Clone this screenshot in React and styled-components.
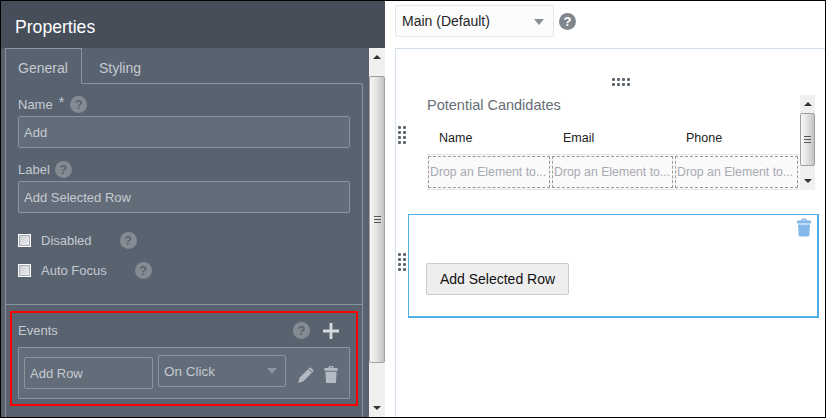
import React from 'react';
import styled, { createGlobalStyle } from 'styled-components';

const GlobalStyle = createGlobalStyle`
  html, body {
    margin: 0;
    padding: 0;
    background: #fff;
  }
  * {
    box-sizing: border-box;
  }
`;

const Page = styled.div`
  display: flex;
  width: 826px;
  height: 418px;
  border: 1px solid #000;
  overflow: hidden;
  font-family: 'Liberation Sans', Arial, sans-serif;
`;

const Properties = styled.aside`
  display: flex;
  flex-direction: column;
  width: 384px;
  flex: none;
  background: #596370;
`;

const PanelHeader = styled.header`
  height: 47px;
  flex: none;
  padding: 15px 0 0 14px;
  background: #454e59;
  color: #fff;
  font-size: 17.6px;
  line-height: 22px;
`;

const PanelBody = styled.div`
  display: flex;
  flex: 1;
  min-height: 0;
`;

const PanelContent = styled.div`
  display: flex;
  flex-direction: column;
  width: 368px;
  padding-left: 4px;
`;

const Tabs = styled.div`
  display: flex;
  height: 36px;
  flex: none;
  margin-bottom: -1px;
`;

const Tab = styled.div`
  width: ${props => props.$width}px;
  padding: 10px 0 0 ${props => props.$pad}px;
  font-size: 14px;
  line-height: 18px;
  color: #c5cad0;
  position: relative;
  z-index: 1;
  border: 1px solid ${props => (props.$active ? '#8b949e' : 'transparent')};
  border-bottom: 1px solid ${props => (props.$active ? '#596370' : 'transparent')};
`;

const TabPane = styled.div`
  display: flex;
  flex-direction: column;
  flex: 1;
  width: 358px;
  border: 1px solid #8b949e;
  border-bottom: none;
  border-top-right-radius: 3px;
`;

const GeneralForm = styled.div`
  display: flex;
  flex-direction: column;
  height: 221px;
  flex: none;
  padding: 10px 12px 0;
  border-bottom: 1px solid #8b949e;
`;

const FieldLabel = styled.div`
  display: flex;
  align-items: center;
  height: 20px;
  margin-top: ${props => props.$top || 0}px;
  margin-bottom: 2px;
  font-size: 13px;
  color: #c5cad0;
  gap: 5px;
`;

const Required = styled.span`
  font-size: 14px;
  margin: -4px 1px 0 1px;
`;

const TextBox = styled.div`
  display: flex;
  align-items: center;
  height: 32px;
  width: ${props => props.$width || 332}px;
  padding-left: 5px;
  background: #636d7a;
  border: 1px solid #8b949e;
  border-radius: 2px;
  font-size: 13px;
  color: #c5cad0;
`;

const CheckRow = styled.label`
  display: flex;
  align-items: center;
  height: 20px;
  margin-top: ${props => props.$top}px;
  font-size: 13px;
  color: #c5cad0;
`;

const CheckBox = styled.span`
  width: 13px;
  height: 13px;
  margin-right: 10px;
  flex: none;
  background: linear-gradient(135deg, #c9cdd2, #f0f1f3);
  border: 1px solid #fff;
  box-shadow: inset 0 0 0 1px #a9aeb4;
`;

const HelpIcon = styled.span`
  display: inline-flex;
  align-items: center;
  justify-content: center;
  width: 17px;
  height: 17px;
  flex: none;
  margin-left: ${props => props.$left || 0}px;
  border-radius: 50%;
  background: ${props => props.$color || '#858b93'};
  color: ${props => props.$ink || '#596370'};
  font-size: 13px;
  font-weight: 700;
`;

const EventsSection = styled.section`
  width: 348px;
  height: 95px;
  margin: 6px 0 0 4px;
  padding: 0 6px;
  border: 2px solid #f00;
`;

const EventsHeader = styled.div`
  display: flex;
  align-items: center;
  height: 34px;
  padding: 1px 10px 0 0;
  font-size: 13px;
  color: #c5cad0;
`;

const EventsTitle = styled.span`
  flex: 1;
`;

const AddEvent = styled.span`
  display: flex;
  margin-left: 12px;
`;

const EventRow = styled.div`
  display: flex;
  align-items: flex-start;
  height: 52px;
  padding: 9px 0 0 5px;
  background: #636d7a;
  border: 1px solid #8b949e;
`;

const SelectBox = styled(TextBox)`
  position: relative;
  margin-left: 5px;
  margin-top: -2px;
  font-size: 13.5px;
`;

const Caret = styled.span`
  position: absolute;
  right: ${props => props.$right}px;
  top: ${props => props.$top}px;
  border-left: 5px solid transparent;
  border-right: 5px solid transparent;
  border-top: 6px solid ${props => props.$color};
`;

const RowActions = styled.div`
  display: flex;
  align-items: center;
  gap: 9px;
  margin: 9px 0 0 12px;
`;

const ScrollTrack = styled.div`
  display: flex;
  flex-direction: column;
  align-items: center;
  justify-content: space-between;
  flex: none;
  width: ${props => props.$width}px;
  background: #f0f0f0;
`;

const ScrollArrow = styled.span`
  width: 0;
  height: 0;
  margin: ${props => (props.$down ? '0 0 7px' : '7px 0 0')};
  border-left: 4px solid transparent;
  border-right: 4px solid transparent;
  border-${props => (props.$down ? 'top' : 'bottom')}: 4px solid #333;
`;

const ScrollThumb = styled.div`
  display: flex;
  flex-direction: column;
  align-items: center;
  justify-content: center;
  gap: 2px;
  width: 100%;
  height: ${props => props.$height}px;
  margin-top: ${props => props.$top}px;
  margin-bottom: auto;
  border: 1px solid #a0a0a0;
  border-radius: 2px;
  background: linear-gradient(90deg, #f8f8f8, #e4e4e4 45%, #c4c4c4);
`;

const GripLine = styled.i`
  display: block;
  width: 7px;
  height: 1px;
  background: #555;
`;

const Designer = styled.main`
  display: flex;
  flex-direction: column;
  flex: 1;
  min-width: 0;
  padding-left: 10px;
  background: #fff;
`;

const Toolbar = styled.div`
  display: flex;
  align-items: center;
  height: 47px;
  flex: none;
  padding-bottom: 7px;
  gap: 5px;
`;

const LayoutSelect = styled.div`
  position: relative;
  width: 159px;
  height: 32px;
  padding: 6px 0 0 6px;
  background: #fcfcfc;
  border: 1px solid #e6e6e6;
  border-radius: 2px;
  font-size: 14px;
  line-height: 18px;
  color: #252525;
`;

const Canvas = styled.div`
  position: relative;
  flex: 1;
  padding: 46px 6px 0 12px;
  border-top: 1px solid #d3e0ee;
  border-left: 1px solid #d3e0ee;
`;

const DragDots = styled.span`
  position: absolute;
  left: ${props => props.$left}px;
  top: ${props => props.$top}px;
  display: grid;
  grid-template-columns: repeat(${props => props.$cols}, 3px);
  gap: 2px;
`;

const Dot = styled.i`
  width: 3px;
  height: 3px;
  border-radius: 1px;
  background: #5e6670;
`;

const TableBlock = styled.div`
  display: flex;
  width: 388px;
  height: 95px;
  margin-left: 19px;
`;

const TableMain = styled.div`
  display: flex;
  flex-direction: column;
  width: 373px;
`;

const TableTitle = styled.div`
  height: 31px;
  font-size: 14.5px;
  line-height: 20px;
  color: #666d75;
`;

const HeaderRow = styled.div`
  display: grid;
  grid-template-columns: 124px 123px 1fr;
  height: 29px;
  border-bottom: 1px solid #e4e4e4;
  font-size: 12.5px;
  line-height: 24px;
  color: #222;
`;

const HeaderCell = styled.div`
  padding-left: 12px;
`;

const DropRow = styled.div`
  display: grid;
  grid-template-columns: 122px 121px 123px;
  gap: 2px;
  align-items: start;
  height: 35px;
  padding: 1px 0 0 1px;
  background: #fafafa;
  border-bottom: 1px solid #e4e4e4;
`;

const DropCell = styled.div`
  height: 32px;
  padding: 0 0 0 1px;
  border: 1px dashed #9a9a9a;
  font-size: 12.3px;
  line-height: 30px;
  color: #a9a9b2;
  white-space: nowrap;
  overflow: hidden;
`;

const SelectedBlock = styled.div`
  position: relative;
  width: 411px;
  height: 104px;
  margin-top: 24px;
  padding: 48px 0 0 17px;
  border-style: solid;
  border-color: #4fb0e8;
  border-width: 1px 2px 2px 1px;
`;

const DeleteIcon = styled.span`
  position: absolute;
  top: 3px;
  right: 6px;
  display: flex;
`;

const ActionButton = styled.button`
  width: 143px;
  height: 32px;
  padding: 0;
  background: #eee;
  border: 1px solid #ccc;
  border-radius: 2px;
  font-family: inherit;
  font-size: 14px;
  color: #111;
`;

const Trash = ({ color, width, height }) => (
  <svg width={width} height={height} viewBox="0 0 14 18" aria-hidden="true">
    <path
      fill={color}
      fillRule="evenodd"
      d="M5 0h4l1 2h4v3H0V2h4l1-2zm1 1.2L5.6 2h2.8L8 1.2H6zM1 6h12l-.7 11.2c0 .5-.4.8-.8.8h-9c-.4 0-.8-.3-.8-.8L1 6z"
    />
  </svg>
);

const Pencil = () => (
  <svg width="17" height="17" viewBox="0 0 17 17" aria-hidden="true">
    <path fill="#b4bac1" d="M12.2 1.2l3.6 3.6L5.4 15.2 0 17l1.8-5.4L12.2 1.2z" />
    <path fill="#636d7a" d="M10.6 3.6l.7-.7 3 3-.7.7-3-3z" />
  </svg>
);

const Plus = () => (
  <svg width="18" height="18" viewBox="0 0 18 18" aria-hidden="true">
    <path fill="#d5d8dc" d="M7.6 1h2.8v6.6H17v2.8h-6.6V17H7.6v-6.6H1V7.6h6.6V1z" />
  </svg>
);

const Dots = ({ count, cols, left, top }) => (
  <DragDots $cols={cols} $left={left} $top={top}>
    {Array.from({ length: count }, (_, i) => (
      <Dot key={i} />
    ))}
  </DragDots>
);

const Scrollbar = ({ width, thumbTop, thumbHeight }) => (
  <ScrollTrack $width={width}>
    <ScrollArrow />
    <ScrollThumb $top={thumbTop} $height={thumbHeight}>
      <GripLine />
      <GripLine />
      <GripLine />
    </ScrollThumb>
    <ScrollArrow $down />
  </ScrollTrack>
);

const columns = ['Name', 'Email', 'Phone'];

export default function App() {
  return (
    <>
      <GlobalStyle />
      <Page>
        <Properties>
          <PanelHeader>Properties</PanelHeader>
          <PanelBody>
            <PanelContent>
              <Tabs>
                <Tab $active $width={77} $pad={12}>General</Tab>
                <Tab $width={76} $pad={16}>Styling</Tab>
              </Tabs>
              <TabPane>
                <GeneralForm>
                  <FieldLabel>
                    Name <Required>*</Required>
                    <HelpIcon>?</HelpIcon>
                  </FieldLabel>
                  <TextBox>Add</TextBox>
                  <FieldLabel $top={11}>
                    Label <HelpIcon>?</HelpIcon>
                  </FieldLabel>
                  <TextBox>Add Selected Row</TextBox>
                  <CheckRow $top={17}>
                    <CheckBox />
                    Disabled
                    <HelpIcon $left={28}>?</HelpIcon>
                  </CheckRow>
                  <CheckRow $top={10}>
                    <CheckBox />
                    Auto Focus
                    <HelpIcon $left={28}>?</HelpIcon>
                  </CheckRow>
                </GeneralForm>
                <EventsSection>
                  <EventsHeader>
                    <EventsTitle>Events</EventsTitle>
                    <HelpIcon>?</HelpIcon>
                    <AddEvent>
                      <Plus />
                    </AddEvent>
                  </EventsHeader>
                  <EventRow>
                    <TextBox $width={129}>Add Row</TextBox>
                    <SelectBox $width={128}>
                      On Click
                      <Caret $right={8} $top={12} $color="#8b949e" />
                    </SelectBox>
                    <RowActions>
                      <Pencil />
                      <Trash color="#b4bac1" width={14} height={17} />
                    </RowActions>
                  </EventRow>
                </EventsSection>
              </TabPane>
            </PanelContent>
            <Scrollbar width={16} thumbTop={17} thumbHeight={287} />
          </PanelBody>
        </Properties>
        <Designer>
          <Toolbar>
            <LayoutSelect>
              Main (Default)
              <Caret $right={9} $top={13} $color="#8a8f96" />
            </LayoutSelect>
            <HelpIcon $color="#7f858c" $ink="#fff">?</HelpIcon>
          </Toolbar>
          <Canvas>
            <Dots count={8} cols={4} left={216} top={29} />
            <Dots count={8} cols={2} left={2} top={77} />
            <TableBlock>
              <TableMain>
                <TableTitle>Potential Candidates</TableTitle>
                <HeaderRow>
                  {columns.map(name => (
                    <HeaderCell key={name}>{name}</HeaderCell>
                  ))}
                </HeaderRow>
                <DropRow>
                  {columns.map(name => (
                    <DropCell key={name}>Drop an Element to...</DropCell>
                  ))}
                </DropRow>
              </TableMain>
              <Scrollbar width={15} thumbTop={7} thumbHeight={53} />
            </TableBlock>
            <SelectedBlock>
              <Dots count={8} cols={2} left={-11} top={38} />
              <DeleteIcon>
                <Trash color="#85b8ea" width={14} height={19} />
              </DeleteIcon>
              <ActionButton>Add Selected Row</ActionButton>
            </SelectedBlock>
          </Canvas>
        </Designer>
      </Page>
    </>
  );
}
